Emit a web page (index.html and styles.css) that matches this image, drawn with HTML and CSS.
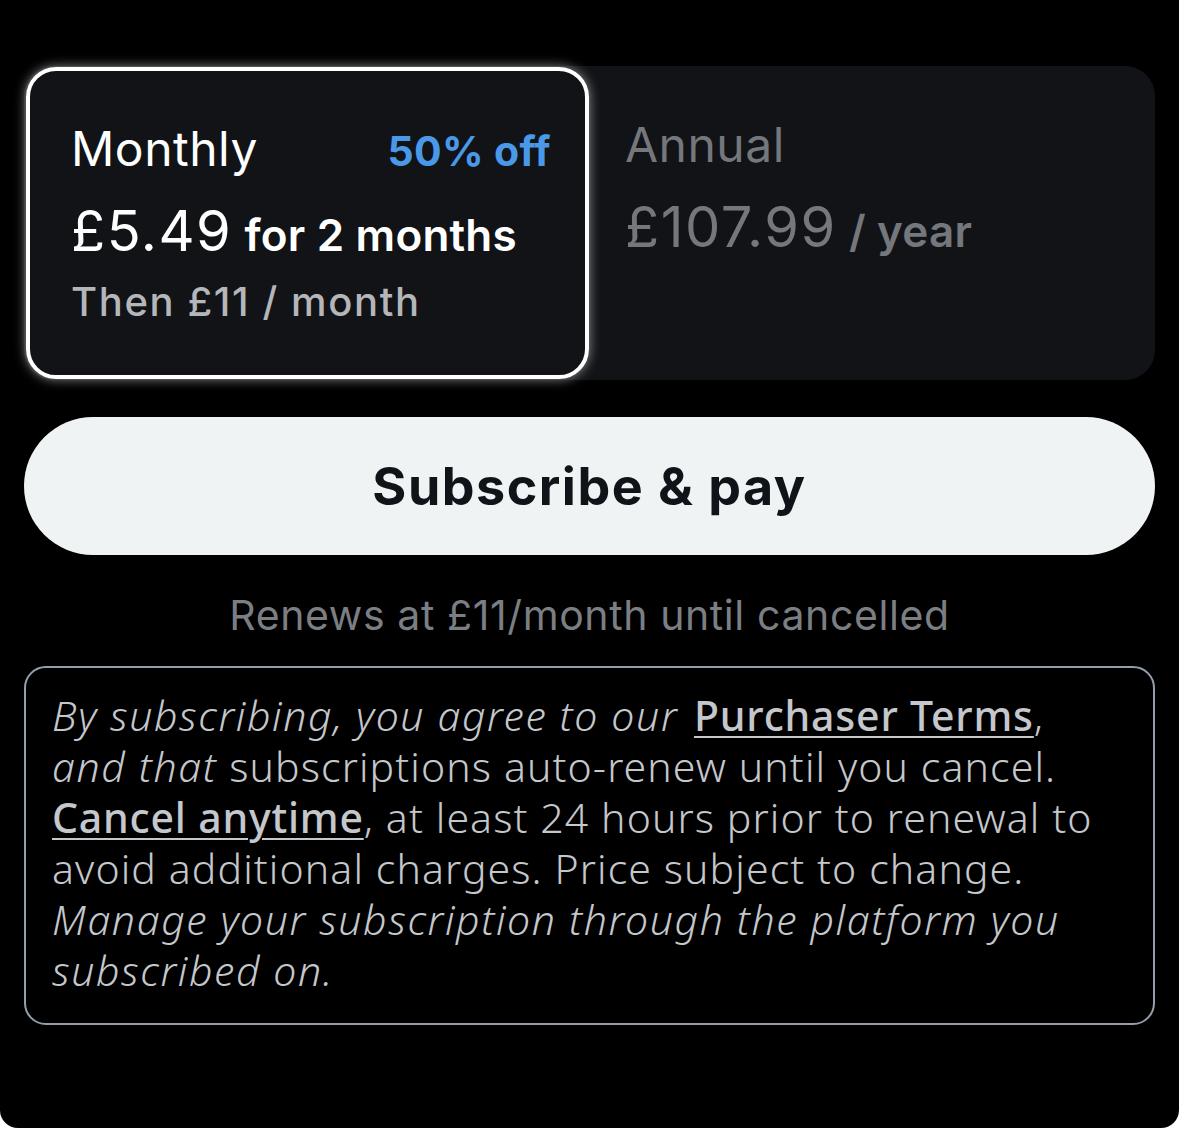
FILE: index.html
```html
<!DOCTYPE html>
<html lang="en">
<head>
    <meta charset="UTF-8">
    <meta name="viewport" content="width=device-width, initial-scale=1.0">
    <title>Subscribe</title>
    <link rel="stylesheet" href="styles.css">
</head>
<body>
    <div class="sheet">
        <div class="plans">
            <div class="plan selected">
                <div class="plan-head">
                    <span class="plan-name">Monthly</span>
                    <span class="discount">50% off</span>
                </div>
                <div class="price">£5.49 <span class="price-unit">for 2 months</span></div>
                <div class="then">Then £11 / month</div>
            </div>
            <div class="plan">
                <div class="plan-head">
                    <span class="plan-name">Annual</span>
                </div>
                <div class="price">£107.99 <span class="price-unit">/ year</span></div>
            </div>
        </div>

        <button class="subscribe">Subscribe &amp; pay</button>

        <p class="renews">Renews at £11/month until cancelled</p>

        <div class="terms">
            <em>By subscribing, you agree to our</em> <a href="#">Purchaser Terms</a>,<br>
            <em>and that</em> subscriptions auto-renew until you cancel.<br>
            <a href="#">Cancel anytime</a>, at least 24 hours prior to renewal to<br>
            avoid additional charges. Price subject to change.<br>
            <em>Manage your subscription through the platform you<br>
            subscribed on.</em>
        </div>
    </div>
</body>
</html>
```

FILE: styles.css
```css
body {
    margin: 0;
    padding: 0;
    background-color: #fff;
    font-family: Inter, "Noto Sans", sans-serif;
}

.sheet {
    background-color: #000;
    height: 1128px;
    box-sizing: border-box;
    padding: 66px 24px 0;
    border-radius: 0 0 18px 18px;
}

.plans {
    display: flex;
    background-color: #121317;
    border-radius: 30px;
    padding: 1px 2px;
    height: 314px;
    box-sizing: border-box;
}

.plan {
    box-sizing: border-box;
    padding: 49px 34px 0 36px;
    color: #74777c;
}

.plan.selected {
    width: 563px;
    border: 4px solid #fff;
    border-radius: 30px;
    padding: 49px 34px 0 41px;
    color: #fff;
    box-shadow: 0 0 12px rgba(255, 255, 255, 0.55);
}

.plan-head {
    display: flex;
    justify-content: space-between;
    align-items: baseline;
}

.plan-name {
    font-size: 48px;
    line-height: 58px;
    letter-spacing: 0.5px;
}

.discount {
    font-size: 41px;
    font-weight: 700;
    color: #4a99e8;
    letter-spacing: 0.3px;
}

.price {
    font-size: 56px;
    line-height: 66px;
    margin-top: 20px;
    letter-spacing: 1.5px;
}

.price-unit {
    margin-left: -5px;
    font-size: 44px;
    font-weight: 600;
    letter-spacing: 0.2px;
}

.then {
    font-size: 40px;
    font-weight: 500;
    line-height: 50px;
    margin-top: 9px;
    color: #b4b6ba;
    letter-spacing: 1.6px;
}

.subscribe {
    display: block;
    width: 100%;
    height: 138px;
    margin-top: 37px;
    border: none;
    border-radius: 69px;
    background-color: #eff3f4;
    color: #0f1419;
    font-family: Inter, "Noto Sans", sans-serif;
    font-size: 52px;
    font-weight: 700;
    letter-spacing: 1.5px;
    cursor: pointer;
}

.renews {
    margin: 36px 0 0;
    text-align: center;
    font-size: 41px;
    line-height: 48px;
    color: #7b7e83;
    letter-spacing: 0.6px;
}

.terms {
    margin-top: 27px;
    border: 2.5px solid #949eaa;
    border-radius: 22px;
    height: 359px;
    box-sizing: border-box;
    padding: 22px 20px 0 26px;
    font-family: "Noto Sans", sans-serif;
    font-size: 41px;
    font-weight: 300;
    line-height: 51px;
    letter-spacing: 1.1px;
    color: #c4c7cb;
}

.terms em {
    font-style: italic;
    letter-spacing: 1.6px;
}

.terms a {
    margin-left: 4px;
    color: #c4c7cb;
    font-weight: 500;
    letter-spacing: 0.8px;
    text-decoration: underline;
    text-underline-offset: 5px;
    text-decoration-thickness: 2px;
}

.terms br + a {
    margin-left: 0;
}
```
